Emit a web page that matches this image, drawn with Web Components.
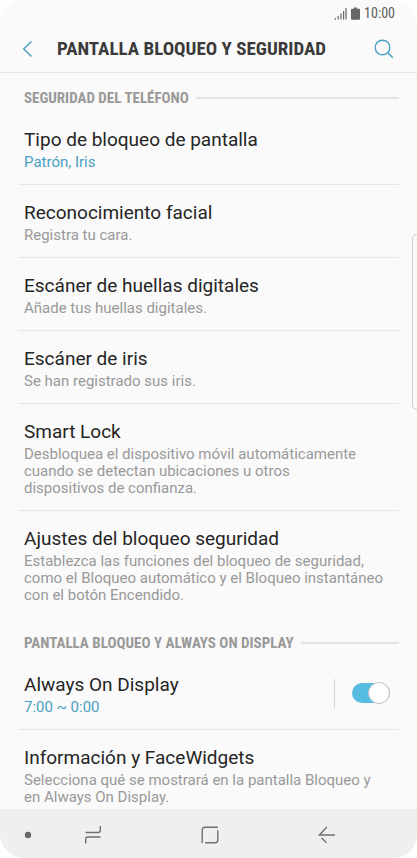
<!DOCTYPE html>
<html lang="es">
<head>
<meta charset="utf-8">
<meta name="viewport" content="width=device-width, initial-scale=1">
<title>Pantalla bloqueo y seguridad</title>
<style>
  body {
    margin: 0;
    background: #ffffff;
    font-family: Roboto, "Liberation Sans", sans-serif;
    --text: #252525;
    --muted: #999999;
    --accent: #4a9fc2;
    --line: #e6e6e6;
    --condensed: "Roboto Condensed", "Liberation Sans Narrow", Roboto, sans-serif;
  }
</style>
</head>
<body>
<phone-screen>
  <status-bar slot="top" time="10:00"></status-bar>
  <app-header slot="top">PANTALLA BLOQUEO Y SEGURIDAD</app-header>

  <settings-section heading="SEGURIDAD DEL TELÉFONO">
    <settings-item heading="Tipo de bloqueo de pantalla" active>Patrón, Iris</settings-item>
    <settings-item heading="Reconocimiento facial">Registra tu cara.</settings-item>
    <settings-item heading="Escáner de huellas digitales">Añade tus huellas digitales.</settings-item>
    <settings-item heading="Escáner de iris">Se han registrado sus iris.</settings-item>
    <settings-item heading="Smart Lock">Desbloquea el dispositivo móvil automáticamente cuando se detectan ubicaciones u otros<br>dispositivos de confianza.</settings-item>
    <settings-item heading="Ajustes del bloqueo seguridad" last>Establezca las funciones del bloqueo de seguridad, como el Bloqueo automático y el Bloqueo instantáneo con el botón Encendido.</settings-item>
  </settings-section>

  <settings-section heading="PANTALLA BLOQUEO Y ALWAYS ON DISPLAY">
    <settings-item heading="Always On Display" active>7:00 ~ 0:00<toggle-switch slot="control" label="Always On Display" checked></toggle-switch></settings-item>
    <settings-item heading="Información y FaceWidgets" last>Selecciona qué se mostrará en la pantalla Bloqueo y en Always On Display.</settings-item>
  </settings-section>

  <nav-bar slot="bottom"></nav-bar>
</phone-screen>

<script>
customElements.define('phone-screen', class extends HTMLElement {
  #template = /* html */ `
    <slot name="top"></slot>
    <main><slot></slot></main>
    <slot name="bottom"></slot>
    <div class="edge-handle"></div>
  `

  #style = /* css */ `
    :host {
      display: flex;
      flex-direction: column;
      position: relative;
      height: 100vh;
      overflow: hidden;
      border-radius: 24px;
      background: #fafafa;
    }

    main {
      flex: 1;
      min-height: 0;
      overflow-y: auto;
      scrollbar-width: none;
    }

    /* edge panel, sticks out over the content */
    .edge-handle {
      position: absolute;
      top: 234px;
      right: 0;
      box-sizing: border-box;
      width: 5px;
      height: 176px;
      border: 1px solid #cccccc;
      border-right: 0;
      border-radius: 6px 0 0 6px;
    }
  `

  constructor () {
    super()
    this.attachShadow({ mode: 'open' })
    this.shadowRoot.innerHTML = `${this.#template} <style>${this.#style}</style>`
  }
})

customElements.define('status-bar', class extends HTMLElement {
  #style = /* css */ `
    :host {
      display: flex;
      justify-content: flex-end;
      align-items: center;
      height: 26px;
      padding-right: 22px;
      font: 14px/26px var(--condensed);
      color: #5c5c5c;
    }

    svg {
      display: block;
      margin-right: 4px;
      fill: #666666;
    }
  `

  constructor () {
    super()
    this.attachShadow({ mode: 'open' })
    this.shadowRoot.innerHTML = /* html */ `
      <svg width="13" height="13" viewBox="0 0 13 13" aria-hidden="true">
        <path d="M0 12.5 2 10.5V12.5ZM3.6 9h1.2v3.5H3.6zM6.4 6.5h1.2v6H6.4zM9 4h1.2v8.5H9zM11.4 1h1.2v11.5h-1.2z"/>
      </svg>
      <svg width="9" height="13" viewBox="0 0 9 13" aria-hidden="true">
        <path d="M3 .5h3v1.2h2a1 1 0 0 1 1 1v9a1 1 0 0 1-1 1H1a1 1 0 0 1-1-1v-9a1 1 0 0 1 1-1h2z"/>
      </svg>
      <span>${this.getAttribute('time')}</span>
      <style>${this.#style}</style>
    `
  }
})

customElements.define('app-header', class extends HTMLElement {
  #template = /* html */ `
    <button type="button" class="back" aria-label="Atrás">
      <svg width="11" height="18" viewBox="0 0 11 18"><path d="M9.5 1.5 1.7 9l7.8 7.5"/></svg>
    </button>
    <h1><slot></slot></h1>
    <button type="button" aria-label="Buscar">
      <svg width="20" height="20" viewBox="0 0 20 20"><circle cx="8.5" cy="8.5" r="7.3"/><path d="m13.8 13.8 5 5"/></svg>
    </button>
  `

  #style = /* css */ `
    :host {
      display: flex;
      align-items: center;
      height: 46px;
      padding: 0 23px 0 22px;
      border-bottom: 1px solid var(--line);
    }

    button {
      display: flex;
      padding: 0;
      border: 0;
      background: none;
    }

    .back {
      width: 35px;
    }

    svg {
      fill: none;
      stroke: var(--accent);
      stroke-width: 1.4;
    }

    h1 {
      flex: 1;
      margin: 0;
      font: 700 19px/24px var(--condensed);
      color: #3a3a3a;
      white-space: nowrap;
    }
  `

  constructor () {
    super()
    this.attachShadow({ mode: 'open' })
    this.shadowRoot.innerHTML = `${this.#template} <style>${this.#style}</style>`
  }
})

customElements.define('settings-section', class extends HTMLElement {
  #style = /* css */ `
    :host {
      display: block;
      padding: 0 18px;
    }

    h2 {
      display: flex;
      align-items: center;
      gap: 7px;
      margin: 0;
      padding: 13px 0 2px 6px;
      font: 700 15px/24px var(--condensed);
      color: var(--muted);
      white-space: nowrap;
    }

    h2::after {
      content: "";
      flex: 1;
      height: 2px;
      background: #e2e2e2;
    }
  `

  constructor () {
    super()
    this.attachShadow({ mode: 'open' })
    this.shadowRoot.innerHTML = /* html */ `
      <h2>${this.getAttribute('heading')}</h2>
      <slot></slot>
      <style>${this.#style}</style>
    `
  }
})

customElements.define('settings-item', class extends HTMLElement {
  #style = /* css */ `
    :host {
      display: flex;
      align-items: center;
      border-bottom: 1px solid var(--line);
    }

    :host([last]) {
      border-bottom-color: transparent;
    }

    a {
      flex: 1;
      padding: 16px 10px 13px 6px;
      text-decoration: none;
      color: var(--muted);
    }

    .title {
      display: block;
      margin-bottom: 2px;
      font-size: 19px;
      line-height: 24px;
      color: var(--text);
    }

    .summary {
      display: block;
      font-size: 15px;
      line-height: 17px;
    }

    :host([active]) .summary {
      color: var(--accent);
    }
  `

  constructor () {
    super()
    this.attachShadow({ mode: 'open' })
    this.shadowRoot.innerHTML = /* html */ `
      <a href="#">
        <span class="title">${this.getAttribute('heading')}</span>
        <span class="summary"><slot></slot></span>
      </a>
      <slot name="control"></slot>
      <style>${this.#style}</style>
    `
  }
})

customElements.define('toggle-switch', class extends HTMLElement {
  #style = /* css */ `
    :host {
      display: flex;
      align-items: center;
      height: 29px;
      padding: 0 9px 0 17px;
      border-left: 1px solid #d6d6d6;
    }

    input {
      appearance: none;
      display: flex;
      align-items: center;
      width: 38px;
      height: 20px;
      margin: 0;
      border-radius: 10px;
      background: #c8c8c8;
    }

    input::before {
      content: "";
      box-sizing: border-box;
      width: 22px;
      height: 22px;
      border: 1px solid #c4c4c4;
      border-radius: 50%;
      background: #ffffff;
    }

    input:checked {
      justify-content: flex-end;
      background: #56bce2;
    }
  `

  constructor () {
    super()
    this.attachShadow({ mode: 'open' })
    this.shadowRoot.innerHTML = /* html */ `
      <input type="checkbox" role="switch" aria-label="${this.getAttribute('label')}">
      <style>${this.#style}</style>
    `
    this.shadowRoot.querySelector('input').checked = this.hasAttribute('checked')
  }
})

customElements.define('nav-bar', class extends HTMLElement {
  #template = /* html */ `
    <button type="button" aria-label="Ocultar barra">
      <svg width="18" height="18" viewBox="0 0 18 18"><circle cx="9" cy="9" r="3.2"/></svg>
    </button>
    <button type="button" aria-label="Recientes">
      <svg width="18" height="18" viewBox="0 0 18 18"><path d="M1.5 6.5h12.8q2 0 2-2V0M16.5 11H3.7q-2 0-2 2v4.5"/></svg>
    </button>
    <button type="button" aria-label="Inicio">
      <svg width="18" height="18" viewBox="0 0 18 18"><path d="M1.2 17V4q0-2.8 2.8-2.8h13M16.8 4.2V14q0 2.8-2.8 2.8H4.2"/></svg>
    </button>
    <button type="button" aria-label="Volver">
      <svg width="18" height="18" viewBox="0 0 18 18"><path d="M17 9H1.5l7.3-8M3.5 11.8l5 5"/></svg>
    </button>
  `

  #style = /* css */ `
    :host {
      display: grid;
      grid-template-columns: 37fr 65fr 117fr 117fr 81fr;
      align-items: center;
      box-sizing: border-box;
      height: 49px;
      padding-top: 3px;
      background: #efefef;
    }

    button {
      display: flex;
      justify-content: flex-end;
      padding: 0;
      border: 0;
      background: none;
    }

    svg {
      fill: none;
      stroke: #707070;
      stroke-width: 1.4;
    }

    circle {
      fill: #666666;
      stroke: none;
    }
  `

  constructor () {
    super()
    this.attachShadow({ mode: 'open' })
    this.shadowRoot.innerHTML = `${this.#template} <style>${this.#style}</style>`
  }
})
</script>
</body>
</html>
